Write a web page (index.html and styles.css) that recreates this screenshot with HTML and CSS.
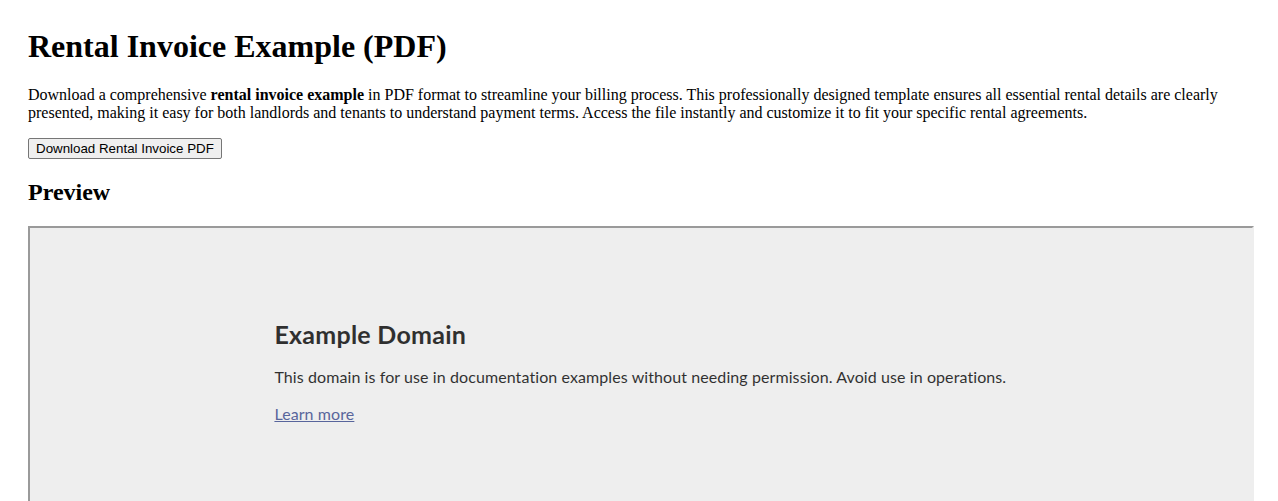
FILE: index.html
```html
<!DOCTYPE html>
<html lang="en">
<head>
<meta charset="utf-8">
<title>Rental Invoice Example (PDF)</title>
<link rel="stylesheet" href="styles.css">
</head>
<body>
<h1 class="title">Rental Invoice Example (PDF)</h1>
<p class="intro">Download a comprehensive <strong>rental invoice example</strong> in PDF format to streamline your billing process. This professionally designed template ensures all essential rental details are clearly presented, making it easy for both landlords and tenants to understand payment terms. Access the file instantly and customize it to fit your specific rental agreements.</p>
<button class="download" type="button">Download Rental Invoice PDF</button>
<h2 class="subtitle">Preview</h2>
<div class="frame">
  <div class="doc">
    <div class="doc-inner">
      <h1 class="doc-title">Example Domain</h1>
      <p class="doc-text">This domain is for use in documentation examples without needing permission. Avoid use in operations.</p>
      <p class="doc-text"><a class="doc-link" href="#">Learn more</a></p>
    </div>
  </div>
</div>
</body>
</html>
```
FILE: styles.css
```css
html {
  overflow: hidden;
}
body {
  margin: 0;
  padding: 28px;
  font-family: "Liberation Serif", "Times New Roman", serif;
  font-size: 16px;
  color: #000;
  background: #fff;
}
.title {
  font-size: 32px;
  font-weight: bold;
  margin: 0 0 21.44px;
}
.intro {
  margin: 16px 0;
}
.download {
  font-family: "Liberation Sans", Arial, sans-serif;
  font-size: 13.333px;
  padding: 2px 7px;
  border: 1px solid #767676;
  border-radius: 2px;
  background: #efefef;
  color: #000;
}
.subtitle {
  font-size: 24px;
  font-weight: bold;
  margin: 19.92px 0;
}
.frame {
  width: 100%;
  height: 600px;
  border-style: solid;
  border-width: 2px;
  border-color: #9a9a9a #eeeeee #eeeeee #9a9a9a;
  background: #eee;
  overflow: hidden;
}
.doc {
  padding: 90px 0;
  font-family: Lato, "Noto Sans", sans-serif;
}
.doc-inner {
  width: 60%;
  margin: 0 auto;
  opacity: 0.8;
  color: #000;
}
.doc-title {
  font-size: 25px;
  line-height: 33px;
  letter-spacing: 0.25px;
  font-weight: bold;
  margin: 0 0 15px;
}
.doc-text {
  font-size: 16px;
  line-height: 21px;
  letter-spacing: 0.09px;
  margin: 15px 0 16px;
}
.doc-link {
  color: #348;
  text-decoration: underline;
}
```
